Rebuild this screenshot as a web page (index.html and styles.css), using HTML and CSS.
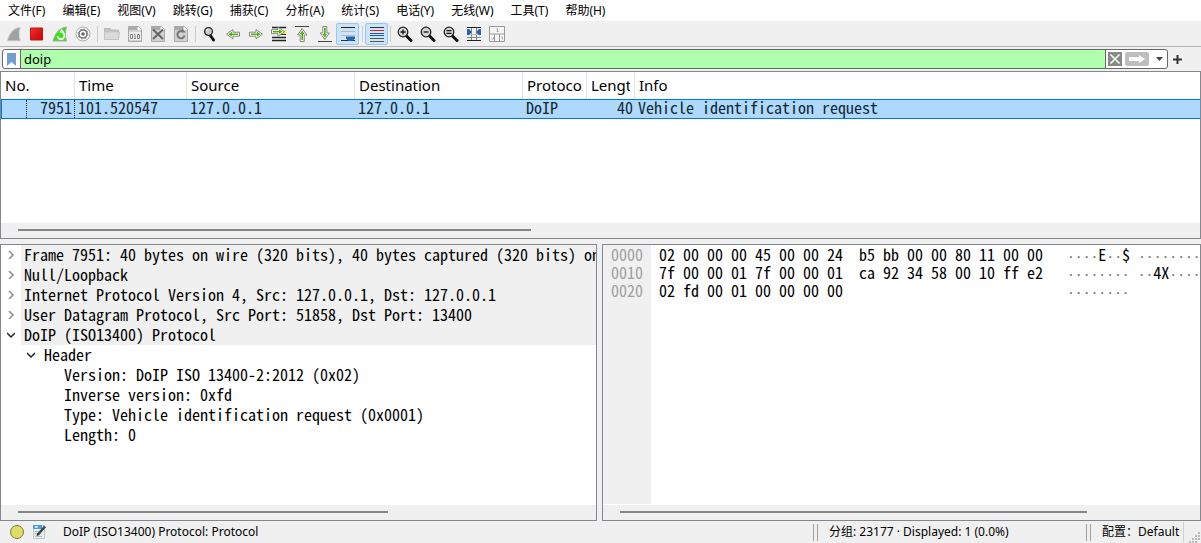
FILE: index.html
```html
<!DOCTYPE html>
<html lang="zh-CN">
<head>
<meta charset="utf-8">
<title>Packet analyzer</title>
<link rel="stylesheet" href="styles.css">
</head>
<body>
<svg class="defs" aria-hidden="true">
  <defs>
    <linearGradient id="red" x1="0" y1="0" x2="1" y2="1"><stop offset="0" stop-color="#ef3333"/><stop offset="1" stop-color="#c40000"/></linearGradient>
    <g id="arrow"><path d="M1.500 6.200h6.500v-2.600l6.500 4.600-6.500 4.600v-2.600h-6.500z" fill="#fff" stroke="#858585"/><path d="M3 7.400h6v-1.600l3.500 2.400-3.500 2.400v-1.600h-6z" fill="#4eb800"/></g>
    <g id="page"><path d="M1.500.5h10l3 3v12h-13z" fill="#d2d2d2" stroke="#a8a8a8"/><path d="M11 .5l3.500 3.500H11z" fill="#f5f5f5"/><path d="M2 1h8v3H2z" fill="#aaa"/></g>
    <g id="lens"><path d="M9 9.500l5 5" stroke="#111" stroke-width="3" stroke-linecap="round"/><circle cx="6" cy="6" r="4.800" fill="#d6d6d6" stroke="#202020" stroke-width="1.300"/></g>
  </defs>
</svg>
<div class="app">
  <nav class="menu">
    <button>文件(F)</button><button>编辑(E)</button><button>视图(V)</button><button>跳转(G)</button><button>捕获(C)</button><button>分析(A)</button><button>统计(S)</button><button>电话(Y)</button><button>无线(W)</button><button>工具(T)</button><button>帮助(H)</button>
  </nav>
  <div class="toolbar">
    <button class="tool" aria-label="Start capture"><svg viewBox="0 0 16 16"><path d="M1 15C3.500 7 7 2 14.500 1c-1.500 5-1.500 9 0 14z" fill="#a2a2a2" stroke="#dcdcdc"/></svg></button>
    <button class="tool" aria-label="Stop capture"><svg viewBox="0 0 16 16"><path d="M1.500 2h12v12h-12z" fill="url(#red)" stroke="#cf1010"/></svg></button>
    <button class="tool" aria-label="Restart capture"><svg viewBox="0 0 16 16"><path d="M1 15C3.500 7 7 2 14.500 1c-1.500 5-1.500 9 0 14z" fill="#37e313" stroke="#aaa"/><path d="M10.500 6.500a3.500 3.500 0 1 1-5 3.500" fill="none" stroke="#fff" stroke-width="1.800"/><path d="M7.500 6.500h5l-3-3.500z" fill="#fff"/></svg></button>
    <button class="tool" aria-label="Capture options"><svg viewBox="0 0 16 16"><circle cx="8" cy="8" r="7" fill="#fff" stroke="#aaa"/><circle cx="8" cy="8" r="4" fill="#fff" stroke="#777" stroke-width="1.600"/><circle cx="8" cy="8" r="5" fill="none" stroke="#777" stroke-dasharray="1.500 2.430"/><circle cx="8" cy="8" r="1.800" fill="#666"/></svg></button>
    <span class="sep"></span>
    <button class="tool" aria-label="Open"><svg viewBox="0 0 16 16"><path d="M.5 2.500h6l1 1.500h7v9.500H.5z" fill="#c4c4c4" stroke="#bbb"/><path d="M.5 6h15l-1 7.500H.5z" fill="#dadada" stroke="#c5c5c5"/></svg></button>
    <button class="tool" aria-label="Save"><svg viewBox="0 0 16 16"><use href="#page"/><path d="M2 6h12v8H2z" fill="#eee"/><g fill="none" stroke="#888"><path d="M3.500 8.500h2v4h-2zM10.500 8.500h2v4h-2zM7 8.500h1v4M7 12.500h2"/></g></svg></button>
    <button class="tool" aria-label="Close file"><svg viewBox="0 0 16 16"><use href="#page"/><path d="M3 3.500l10 9.500M13 3.500L3 13" stroke="#666" stroke-width="2"/></svg></button>
    <button class="tool" aria-label="Reload file"><svg viewBox="0 0 16 16"><use href="#page"/><path d="M11.500 9.500a3.600 3.600 0 1 1-1.800-4" fill="none" stroke="#777" stroke-width="2"/><path d="M9 2.500l4 4H8.500z" fill="#777"/></svg></button>
    <span class="sep"></span>
    <button class="tool" aria-label="Find packet"><svg viewBox="0 0 16 16"><path d="M8 9l3.500 5" stroke="#111" stroke-width="3" stroke-linecap="round"/><circle cx="6.500" cy="5.500" r="3.900" fill="#ccc" stroke="#222" stroke-width="1.300"/><path d="M4.500 5a2 2 0 0 1 2-2" fill="none" stroke="#fff"/></svg></button>
    <button class="tool" aria-label="Previous packet"><svg viewBox="0 0 16 16"><use href="#arrow" transform="matrix(-1 0 0 1 16 0)"/></svg></button>
    <button class="tool" aria-label="Next packet"><svg viewBox="0 0 16 16"><use href="#arrow"/></svg></button>
    <button class="tool" aria-label="Go to packet"><svg viewBox="0 0 16 16"><path d="M1 1.500h14M1 11.500h14M1 14.500h14" stroke="#222" stroke-width="1.300"/><path d="M9 4h6v5H9z" fill="#f9e34c"/><path d="M10 8.500h5" stroke="#333"/><use href="#arrow" transform="translate(-1 -2.500)"/></svg></button>
    <button class="tool" aria-label="First packet"><svg viewBox="0 0 16 16"><path d="M1 .5h14" stroke="#444"/><use href="#arrow" transform="matrix(0 -1 1 0 0 17)"/></svg></button>
    <button class="tool" aria-label="Last packet"><svg viewBox="0 0 16 16"><path d="M1 15.500h14" stroke="#444"/><use href="#arrow" transform="matrix(0 1 -1 0 16 -1)"/></svg></button>
    <button class="tool on" aria-label="Auto scroll" aria-pressed="true"><svg viewBox="0 0 16 16"><path d="M1 1.500h14" stroke="#222"/><path d="M1 5.500h14M1 9.500h14" stroke="#bbb"/><path d="M1 14.500h14" stroke="#333"/><path d="M6 10.500h9v2l-2.500 2.500h-4L6 12.500z" fill="#2864ad"/></svg></button>
    <span class="sep"></span>
    <button class="tool on" aria-label="Colorize" aria-pressed="true"><svg viewBox="0 0 16 16"><path d="M1 1.500h14" stroke="#333"/><path d="M1 4.500h14" stroke="#d22"/><path d="M1 7.500h14M1 9.500h14" stroke="#2559a0"/><path d="M1 12.500h14M1 15.500h14" stroke="#555"/></svg></button>
    <span class="sep"></span>
    <button class="tool" aria-label="Zoom in"><svg viewBox="0 0 16 16"><use href="#lens"/><path d="M3.500 6h5M6 3.500v5" stroke="#111" stroke-width="1.300"/></svg></button>
    <button class="tool" aria-label="Zoom out"><svg viewBox="0 0 16 16"><use href="#lens"/><path d="M3.500 6h5" stroke="#111" stroke-width="1.300"/></svg></button>
    <button class="tool" aria-label="Normal size"><svg viewBox="0 0 16 16"><use href="#lens"/><path d="M3.500 4.700h5M3.500 7.300h5" stroke="#111" stroke-width="1.300"/></svg></button>
    <button class="tool" aria-label="Resize columns"><svg viewBox="0 0 16 16"><path d="M1 1.500h14M1 14.500h14" stroke="#222"/><path d="M1 11.500h14M5.500 2v12M10.500 2v12" stroke="#888"/><path d="M1 8.500h14" stroke="#bbb"/><path d="M1 3h2l3 3-3 3H1zM15 3h-2l-3 3 3 3h2z" fill="#2763aa"/></svg></button>
    <button class="tool" aria-label="Reset layout"><svg viewBox="0 0 16 16"><path d="M.5.500h15v15H.5zM.5 8h15M5.500 8v7.500M10.500 8v7.500" fill="#f5f5f5" stroke="#999"/><path d="M7.500 5.500h2M8.500 2.500v3M7.500 3h1M2.500 13h2v-2M12 11h1.500v2.500" fill="none" stroke="#aaa"/></svg></button>
  </div>
  <div class="filter">
    <div class="filter-box">
      <button class="bookmark" aria-label="Filter bookmarks"><svg viewBox="0 0 9 13"><path d="M0 0h9v13L4.500 9 0 13z" fill="#729fcf"/></svg></button>
      <input type="text" value="doip" aria-label="Display filter" spellcheck="false">
      <div class="filter-tools">
        <button aria-label="Clear filter"><svg width="14" height="14" viewBox="0 0 14 14"><path d="M0 0h14v14H0z" fill="#888a85"/><path d="M2.500 2.500l9 9M11.500 2.500l-9 9" stroke="#fff" stroke-width="1.500"/></svg></button>
        <button aria-label="Apply filter"><svg width="24" height="14" viewBox="0 0 24 14"><rect width="24" height="14" rx="2" fill="#bebebe"/><path d="M4 5h10V3l6 4-6 4V9H4z" fill="#fff"/></svg></button>
        <button class="drop" aria-label="Recent filters"><svg width="7" height="4" viewBox="0 0 7 4"><path d="M0 0h7L3.500 4z" fill="#444"/></svg></button>
      </div>
    </div>
    <button class="add" aria-label="Add filter button"><svg width="9" height="9" viewBox="0 0 9 9"><path d="M0 4.500h9M4.500 0v9" stroke="#333" stroke-width="2"/></svg></button>
  </div>

  <section class="pane packets">
    <table>
      <colgroup><col class="c-no"><col class="c-time"><col class="c-addr"><col class="c-addr"><col class="c-proto"><col class="c-len"><col></colgroup>
      <thead><tr><th>No.</th><th>Time</th><th>Source</th><th>Destination</th><th><span>Protocol</span></th><th><span>Length</span></th><th>Info</th></tr></thead>
      <tbody><tr><td><span class="focus">7951</span></td><td>101.520547</td><td>127.0.0.1</td><td>127.0.0.1</td><td>DoIP</td><td class="num">40</td><td>Vehicle identification request</td></tr></tbody>
    </table>
    <div class="scroll"><div class="thumb thumb-list"></div></div>
  </section>

  <div class="split">
    <section class="pane details">
      <ul class="tree">
        <li><button aria-label="Expand"><svg viewBox="0 0 8 8"><path d="M2 0l4 4-4 4" fill="none" stroke="#888" stroke-width="1.500"/></svg></button><span>Frame 7951: 40 bytes on wire (320 bits), 40 bytes captured (320 bits) on</span></li>
        <li><button aria-label="Expand"><svg viewBox="0 0 8 8"><path d="M2 0l4 4-4 4" fill="none" stroke="#888" stroke-width="1.500"/></svg></button><span>Null/Loopback</span></li>
        <li><button aria-label="Expand"><svg viewBox="0 0 8 8"><path d="M2 0l4 4-4 4" fill="none" stroke="#888" stroke-width="1.500"/></svg></button><span>Internet Protocol Version 4, Src: 127.0.0.1, Dst: 127.0.0.1</span></li>
        <li><button aria-label="Expand"><svg viewBox="0 0 8 8"><path d="M2 0l4 4-4 4" fill="none" stroke="#888" stroke-width="1.500"/></svg></button><span>User Datagram Protocol, Src Port: 51858, Dst Port: 13400</span></li>
        <li><button aria-label="Collapse"><svg viewBox="0 0 8 8"><path d="M0 2l4 4 4-4" fill="none" stroke="#222" stroke-width="1.500"/></svg></button><span>DoIP (ISO13400) Protocol</span></li>
        <li class="child"><button aria-label="Collapse"><svg viewBox="0 0 8 8"><path d="M0 2l4 4 4-4" fill="none" stroke="#222" stroke-width="1.500"/></svg></button><span>Header</span></li>
        <li class="leaf"><span>Version: DoIP ISO 13400-2:2012 (0x02)</span></li>
        <li class="leaf"><span>Inverse version: 0xfd</span></li>
        <li class="leaf"><span>Type: Vehicle identification request (0x0001)</span></li>
        <li class="leaf"><span>Length: 0</span></li>
      </ul>
      <div class="scroll"><div class="thumb thumb-tree"></div></div>
    </section>
    <section class="pane bytes">
      <div class="hex">
        <pre class="offsets">0000
0010
0020</pre>
        <pre class="dump">02 00 00 00 45 00 00 24  b5 bb 00 00 80 11 00 00   <i>····</i>E<i>··</i>$ <i>········</i>
7f 00 00 01 7f 00 00 01  ca 92 34 58 00 10 ff e2   <i>········</i> <i>··</i>4X<i>····</i>
02 fd 00 01 00 00 00 00                            <i>········</i></pre>
      </div>
      <div class="scroll"><div class="thumb thumb-hex"></div></div>
    </section>
  </div>

  <footer class="status">
    <button aria-label="Expert information"><svg width="16" height="16" viewBox="0 0 16 16"><circle cx="8" cy="8" r="6.500" fill="#dddc63" stroke="#777842"/></svg></button>
    <button aria-label="Capture comments"><svg width="16" height="16" viewBox="0 0 16 16"><path d="M1.500 1.500h11v13h-11z" fill="#e9eeee" stroke="#c0c8c8"/><path d="M1 1h9v4H1z" fill="#49a0d8"/><path d="M4 2v2M3 3h3" stroke="#fff"/><path d="M3 7.500h7M3 10h3M3 12.500h7" stroke="#b4bcbc"/><path d="M6 10.500l7-8" stroke="#3d4548" stroke-width="2.500"/><path d="M4.500 12l.8-3 2 2z" fill="#222"/></svg></button>
    <span class="field">DoIP (ISO13400) Protocol: Protocol</span>
    <span class="grip"></span>
    <span class="counts">分组: 23177 · Displayed: 1 (0.0%)</span>
    <span class="grip"></span>
    <span class="profile">配置：Default</span>
    <svg class="sizer" viewBox="0 0 12 12"><path d="M9 1h2v2H9zM6 4h2v2H6zM9 4h2v2H9zM3 7h2v2H3zM6 7h2v2H6zM9 7h2v2H9zM0 10h2v2H0zM3 10h2v2H3zM6 10h2v2H6z" fill="#bbb"/></svg>
  </footer>
</div>
</body>
</html>
```
FILE: styles.css
```css
* { box-sizing: border-box; }
body {
  margin: 0;
  background: #f0f0f0;
  color: #000;
  font: 12px/20px "Noto Sans", "Noto Sans CJK SC", sans-serif;
}
button {
  padding: 0;
  border: 0;
  background: none;
  color: inherit;
  font: inherit;
}
svg { display: block; }
.defs { position: absolute; width: 0; height: 0; }
.app { display: flex; flex-direction: column; min-height: 100vh; }

.menu { display: flex; gap: 17px; padding: 0 8px; height: 21px; background: #fff; white-space: nowrap; }

.toolbar { display: flex; align-items: center; height: 26px; padding: 0 2px; border-bottom: 1px solid #b4b4b4; }
.tool { display: grid; place-items: center; width: 23px; height: 22px; }
.tool svg { width: 16px; height: 16px; }
.tool.on { border: 1px solid #90c8f6; border-radius: 2px; background: #cce4f7; }
.sep { width: 1px; height: 16px; margin: 0 2px 0 3px; background: #ccc; }
.sep + .on + .sep { margin-left: 2px; }

.filter { display: flex; align-items: center; height: 24px; padding: 0 2px; }
.filter-box { display: flex; flex: 1; height: 20px; border: 1px solid #686868; border-radius: 3px; background: #fff; overflow: hidden; }
.bookmark { display: grid; place-items: center; width: 18px; border-right: 1px solid #686868; }
.bookmark svg { width: 9px; height: 13px; }
.filter input { flex: 1; min-width: 0; padding: 0 3px; border: 0; outline: 0; background: #afffaf; color: #000; font: 13px/18px "Noto Sans", sans-serif; }
.filter-tools { display: flex; align-items: center; gap: 3px; padding-left: 2px; border-left: 1px solid #686868; }
.drop { display: grid; place-items: center; width: 15px; height: 14px; }
.add { display: grid; place-items: center; width: 19px; margin-right: 12px; }

.pane { display: flex; flex-direction: column; border: 1px solid #828790; background: #fff; overflow: hidden; }
.scroll { height: 15px; margin-top: auto; padding: 6px 17px 0; background: #f0f0f0; }
.thumb { height: 2px; background: #868686; }
.thumb-list { width: 44%; }
.thumb-tree { width: 66%; }
.thumb-hex { width: 83%; }

.packets { height: 168px; }
table { width: 100%; table-layout: fixed; border-collapse: separate; border-spacing: 0; white-space: nowrap; }
.c-no { width: 74px; }
.c-time { width: 112px; }
.c-addr { width: 168px; }
.c-proto { width: 64px; }
.c-len { width: 48px; }
th { height: 27px; padding: 0 4px; border-right: 1px solid #e2e2e2; font: 15px/26px "Noto Sans", sans-serif; text-align: left; vertical-align: top; overflow: hidden; }
th:last-child { border-right: 0; }
th span { display: block; overflow: hidden; }
td, .tree, pre { font-family: "Noto Sans Mono CJK SC", "DejaVu Sans Mono", monospace; font-size: 16px; }
td { height: 20px; padding: 0 3px; border: solid #0078d7; border-width: 1px 0; background: #aed9ff; color: #12272e; line-height: 14px; vertical-align: top; }
td:first-child { border-left-width: 1px; padding: 0; }
td.num { text-align: right; padding: 0 2px; }
.focus { display: block; height: 18px; margin-left: 24px; padding-right: 2px; border: dotted #222; border-width: 0 1px; text-align: right; }

.split { display: grid; grid-template-columns: 597fr 599fr; gap: 5px; flex: 1; margin-top: 5px; }
.split .pane { min-width: 0; }
.tree { margin: 0; padding: 0; list-style: none; line-height: 18px; white-space: nowrap; }
.tree li { display: flex; height: 20px; }
.tree li button { display: grid; place-items: center; width: 20px; flex: none; }
.tree li svg { width: 8px; height: 8px; }
.tree li span { flex: 1; padding-left: 3px; background: #f0f0f0; }
.tree .child { padding-left: 20px; }
.tree .leaf { padding-left: 60px; }
.tree .child span, .tree .leaf span { background: #fff; }

.hex { display: flex; flex: 1; margin-bottom: 1px; line-height: 18px; }
pre { margin: 0; }
.offsets { width: 48px; padding-left: 8px; flex: none; background: #f0f0f0; color: #a0a0a0; }
.dump { padding-left: 8px; }
.dump i { font: 13px/8px "DejaVu Sans Mono", monospace; color: #707070; }

.status { display: flex; align-items: center; height: 22px; padding: 0 0 0 9px; white-space: nowrap; }
.status button { margin-right: 7px; }
.field { flex: 1; margin-left: 8px; }
.grip { width: 5px; height: 17px; border: solid #a0a0a0; border-width: 0 1px; }
.counts { width: 268px; padding-left: 11px; }
.profile { width: 93px; padding-left: 11px; border-right: 1px solid #d0d0d0; }
.sizer { width: 12px; height: 12px; margin-left: 5px; align-self: flex-end; }
```
